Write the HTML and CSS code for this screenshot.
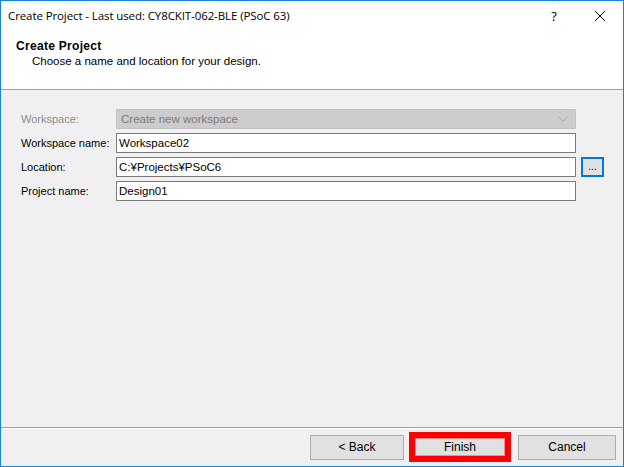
FILE: index.html
```html
<!doctype html>
<html>
	<head>
		<meta charset="utf-8" />
		<title>Create Project</title>
		<link rel="stylesheet" href="styles.css">
	</head>
	<body>
		<div class="window">
			<div class="titlebar">
				<span class="title">Create Project - Last used: CY8CKIT-062-BLE (PSoC 63)</span>
				<span class="help">?</span>
				<span class="close">
					<svg width="12" height="12" viewBox="0 0 12 12"><path d="M1 1 L11 11 M11 1 L1 11" stroke="#000" stroke-width="1" fill="none"/></svg>
				</span>
			</div>
			<div class="header">
				<h1>Create Project</h1>
				<p>Choose a name and location for your design.</p>
			</div>
			<div class="content">
				<div class="form">
					<label class="disabled">Workspace:</label>
					<div class="combo">
						<span>Create new workspace</span>
						<svg width="10" height="6" viewBox="0 0 10 6"><path d="M0.5 0.5 L5 5 L9.5 0.5" stroke="#a8a8a8" stroke-width="1" fill="none"/></svg>
					</div>
					<span></span>

					<label>Workspace name:</label>
					<div class="input">Workspace02</div>
					<span></span>

					<label>Location:</label>
					<div class="input">C:¥Projects¥PSoC6</div>
					<button class="browse">...</button>

					<label>Project name:</label>
					<div class="input">Design01</div>
					<span></span>
				</div>
			</div>
			<div class="footer">
				<button class="btn btn-back">&lt; Back</button>
				<div class="mark"><button class="btn btn-finish">Finish</button></div>
				<button class="btn btn-cancel">Cancel</button>
			</div>
		</div>
	</body>
</html>
```

FILE: styles.css
```css
html, body, div, h1, p { margin: 0; padding: 0; }
body { width: 624px; height: 467px; background: #fff; font-family: "Liberation Sans", "Noto Sans CJK JP", sans-serif; font-size: 11.5px; color: #000; }

.window { box-sizing: border-box; width: 624px; height: 467px; border: 1px solid #1883d7; display: flex; flex-direction: column; background: #f0f0f0; }

.titlebar { height: 29px; background: #fff; display: flex; align-items: center; padding-left: 7px; }
.title { flex: 1; font-family: "Open Sans", sans-serif; font-size: 11.5px; letter-spacing: -0.1px; }
.help { width: 46px; text-align: center; font-family: "Open Sans", sans-serif; font-size: 13px; }
.close { width: 46px; height: 29px; display: flex; align-items: center; justify-content: center; }

.header { height: 60px; background: #fff; border-bottom: 1px solid #a0a0a0; padding: 9px 0 0 15px; box-sizing: border-box; }
.header h1 { font-size: 12px; font-weight: bold; line-height: 15px; letter-spacing: 0.3px; }
.header p { padding-left: 16px; line-height: 15px; }

.content { flex: 1; padding: 19px 0 0 20px; }
.form { display: grid; grid-template-columns: 95px 460px 28px; row-gap: 4px; align-items: center; }
.form label { line-height: 20px; white-space: nowrap; font-size: 11px; }
.form label.disabled { color: #8d8d8d; }

.combo { box-sizing: border-box; height: 20px; background: #cccccc; border: 1px solid #c2c2c2; color: #7b7b7b; display: flex; align-items: center; justify-content: space-between; padding: 0 7px 0 4px; }
.input { box-sizing: border-box; height: 20px; background: #fff; border: 1px solid #7a7a7a; line-height: 18px; padding-left: 2px; }
.browse { box-sizing: border-box; margin-left: 5px; width: 23px; height: 20px; background: #e1e1e1; border: 2px solid #0078d7; padding: 0; font-family: "Liberation Sans", sans-serif; font-size: 10px; line-height: 12px; }

.footer { height: 39px; border-top: 1px solid #a0a0a0; box-shadow: inset 0 1px 0 #fff; display: flex; align-items: center; padding-left: 309px; box-sizing: border-box; }
.btn { box-sizing: border-box; height: 25px; background: #e1e1e1; border: 1px solid #adadad; font-family: "Liberation Sans", "Noto Sans CJK JP", sans-serif; font-size: 12px; padding: 0; color: #000; }
.btn-back { width: 94px; }
.mark { box-sizing: border-box; width: 102px; height: 30px; border: 6px solid #ff0000; margin-left: 5px; display: flex; }
.btn-finish { width: 90px; height: 18px; border-color: #ef8f8f; }
.btn-cancel { width: 98px; margin-left: 7px; }
```
